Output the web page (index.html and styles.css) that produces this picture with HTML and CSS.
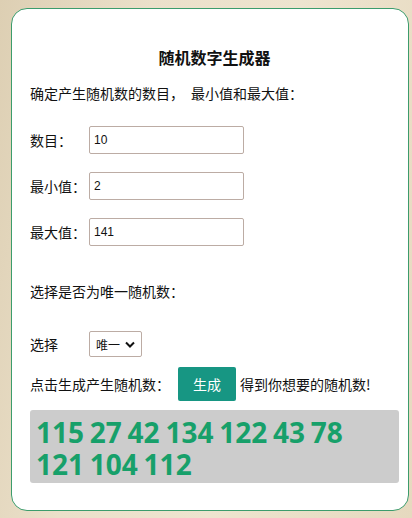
FILE: index.html
```html
<!DOCTYPE html>
<html lang="zh-CN">
<head>
    <meta charset="UTF-8">
    <meta name="viewport" content="width=device-width, initial-scale=1.0">
    <title>随机数字生成器</title>
    <link rel="stylesheet" href="styles.css">
</head>
<body>
    <div class="card">
        <h2 class="title">随机数字生成器</h2>
        <p class="intro">确定产生随机数的数目<span class="comma">，</span>最小值和最大值：</p>
        <div class="field">
            <label for="count">数目：</label>
            <input type="text" id="count" value="10">
        </div>
        <div class="field">
            <label for="min">最小值：</label>
            <input type="text" id="min" value="2">
        </div>
        <div class="field field-last">
            <label for="max">最大值：</label>
            <input type="text" id="max" value="141">
        </div>
        <p class="question">选择是否为唯一随机数：</p>
        <div class="field field-select">
            <label for="unique">选择</label>
            <select id="unique">
                <option value="1">唯一</option>
                <option value="0">可重复</option>
            </select>
        </div>
        <div class="generate-row">
            <span>点击生成产生随机数：</span>
            <button id="generate">生成</button>
            <span>得到你想要的随机数!</span>
        </div>
        <div id="result" class="result">115 27 42 134 122 43 78 121 104 112</div>
    </div>
</body>
</html>
```

FILE: styles.css
```css
body {
    margin: 0;
    min-height: 518px;
    font-family: "Microsoft YaHei", "Noto Sans CJK SC", sans-serif;
    font-size: 14px;
    color: #111;
    background: linear-gradient(100deg, #ddcfb3 0%, #ebe0ca 30%, #eee4cf 60%, #e6d9bf 100%);
}
.card {
    width: 369px;
    margin: 8px 0 0 11px;
    padding: 0 9px 27px 18px;
    background: #fff;
    border: 1px solid #3c9c6c;
    border-radius: 16px;
}
.title {
    margin: 36px 0 0;
    font-size: 16px;
    line-height: 24px;
    text-align: center;
}
.intro {
    margin: 14px 0 0;
    line-height: 20px;
}
.comma {
    margin-right: 7px;
}
.field {
    display: flex;
    align-items: center;
    margin-top: 18px;
}
.field:first-of-type {
    margin-top: 23px;
}
.field label {
    width: 59px;
    flex-shrink: 0;
}
.field input {
    width: 155px;
    height: 28px;
    box-sizing: border-box;
    padding: 0 4px;
    border: 1px solid #bcaca4;
    border-radius: 2px;
    font-family: "Liberation Sans", Arial, sans-serif;
    font-size: 12px;
    color: #111;
}
.question {
    margin: 35px 0 0;
    line-height: 20px;
}
.field-select {
    margin-top: 30px;
}
.field-select select {
    appearance: none;
    -webkit-appearance: none;
    width: 53px;
    height: 26px;
    padding: 0 0 0 6px;
    border: 1px solid #bcaca4;
    border-radius: 2px;
    font-family: inherit;
    font-size: 12px;
    color: #111;
    background: #fff url("data:image/svg+xml,%3Csvg xmlns='http://www.w3.org/2000/svg' width='10' height='7' viewBox='0 0 10 7'%3E%3Cpath d='M1 1.5l4 4 4-4' fill='none' stroke='%23111' stroke-width='2'/%3E%3C/svg%3E") no-repeat right 6px center;
}
.generate-row {
    display: flex;
    align-items: center;
    margin-top: 10px;
}
.generate-row button {
    width: 58px;
    height: 34px;
    margin: 0 4px 0 8px;
    border: none;
    border-radius: 2px;
    background: #179683;
    color: #fff;
    font-family: inherit;
    font-size: 14px;
    cursor: pointer;
}
.result {
    margin-top: 9px;
    padding: 6px 6px 3px;
    background: #cccccc;
    border-radius: 3px;
    color: #17a06a;
    font-family: "Open Sans", sans-serif;
    font-weight: bold;
    font-size: 28px;
    line-height: 32px;
    word-spacing: -1.5px;
}
```
